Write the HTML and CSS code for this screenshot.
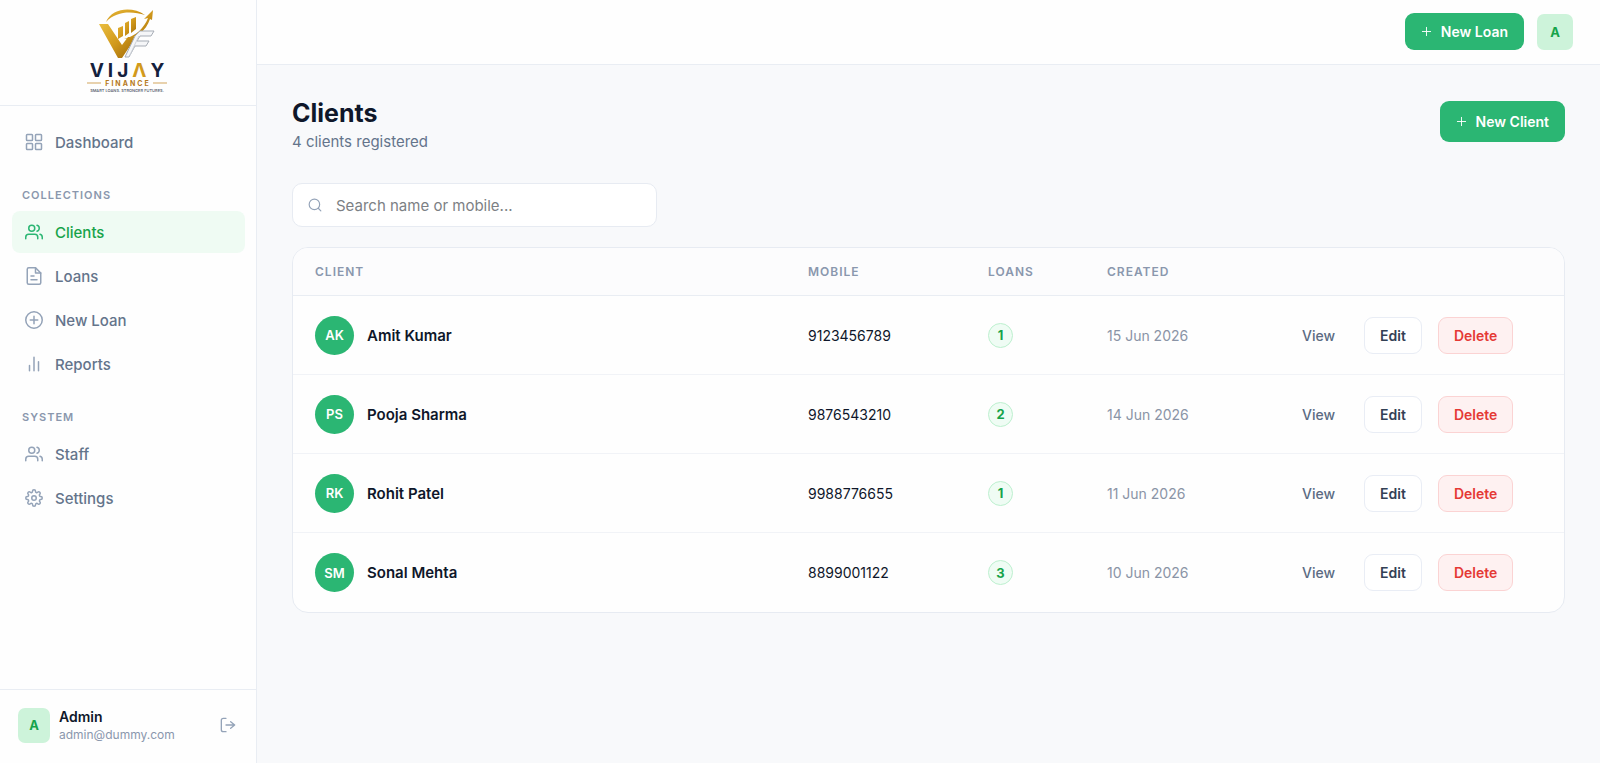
FILE: index.html
```html
<!DOCTYPE html>
<html lang="en">
<head>
  <meta charset="UTF-8" />
  <meta name="viewport" content="width=device-width, initial-scale=1.0" />
  <title>Clients - Vijay Finance</title>
  <link rel="stylesheet" href="styles.css">
</head>
<body>
  <!-- shared icons -->
  <svg class="sprite" aria-hidden="true">
    <symbol id="i-users" viewBox="0 0 24 24"><path d="M17 21v-2a4 4 0 0 0-4-4H5a4 4 0 0 0-4 4v2"/><circle cx="9" cy="7" r="4"/><path d="M23 21v-2a4 4 0 0 0-3-3.87"/><path d="M16 3.13a4 4 0 0 1 0 7.75"/></symbol>
    <symbol id="i-plus" viewBox="0 0 24 24"><path d="M12 3v18M3 12h18"/></symbol>
  </svg>

  <div class="layout">
    <aside class="sidebar">
      <a class="logo" href="#">
        <svg viewBox="0 0 120 104" role="img" aria-label="Vijay Finance">
          <defs>
            <linearGradient id="gold" x1="0" y1="0" x2="1" y2="1">
              <stop offset="0" stop-color="#e9bd3f"/>
              <stop offset="0.5" stop-color="#d29a1c"/>
              <stop offset="1" stop-color="#9c6708"/>
            </linearGradient>
          </defs>
          <path d="M36 22C42 8 62 6 75 15C62 11 46 11 36 22Z" fill="url(#gold)"/>
          <path d="M29 24h9l14 21 6-8h8L52 58h-4Z" fill="url(#gold)"/>
          <path d="M48 28l5-2v10l-5 3ZM55 23l4-2v12l-4 3ZM61 19l5-2v12l-5 4Z" fill="url(#gold)"/>
          <path d="M54 39C66 36 74 28 78 18l-4 1 9-9-1 10-2-1C76 31 66 39 54 39Z" fill="url(#gold)"/>
          <path d="M55 57l10-21 5-5h14l-3 5H70l-3 5h12l-3 5H65l-6 11Z" fill="#f5f6f8" stroke="#a7adb6" stroke-width="1"/>
          <path d="M60 55l6-13 3-6" fill="none" stroke="#cfd3d9" stroke-width="1"/>
          <text class="logo-name" x="59" y="77" text-anchor="middle">VIJ<tspan class="logo-gold">Λ</tspan>Y</text>
          <path d="M17 83h14M83 83h14" stroke="#d2a55c" stroke-width="1"/>
          <text class="logo-sub" x="58" y="86" text-anchor="middle">FINANCE</text>
          <text class="logo-tag" x="57" y="92" text-anchor="middle">SMART LOANS. STRONGER FUTURES.</text>
        </svg>
      </a>

      <nav class="nav">
        <a class="nav-item" href="#"><svg class="icon" viewBox="0 0 24 24"><rect x="2" y="2" width="8" height="8" rx="1"/><rect x="14" y="2" width="8" height="8" rx="1"/><rect x="2" y="14" width="8" height="8" rx="1"/><rect x="14" y="14" width="8" height="8" rx="1"/></svg>Dashboard</a>

        <div class="nav-label">Collections</div>
        <a class="nav-item active" href="#"><svg class="icon"><use href="#i-users"/></svg>Clients</a>
        <a class="nav-item" href="#"><svg class="icon" viewBox="0 0 24 24"><path d="M14 1H5a2 2 0 0 0-2 2v18a2 2 0 0 0 2 2h14a2 2 0 0 0 2-2V8Z"/><path d="M14 1v7h7M8 12h4M8 17h8"/></svg>Loans</a>
        <a class="nav-item" href="#"><svg class="icon" viewBox="0 0 24 24"><circle cx="12" cy="12" r="11"/><path d="M12 7v10M7 12h10"/></svg>New Loan</a>
        <a class="nav-item" href="#"><svg class="icon" viewBox="0 0 24 24"><path d="M6 21v-7M12 21V3M18 21V9"/></svg>Reports</a>

        <div class="nav-label">System</div>
        <a class="nav-item" href="#"><svg class="icon"><use href="#i-users"/></svg>Staff</a>
        <a class="nav-item" href="#"><svg class="icon" viewBox="0 0 24 24"><circle cx="12" cy="12" r="3"/><path d="M19.4 15a1.65 1.65 0 0 0 .33 1.82l.06.06a2 2 0 1 1-2.83 2.83l-.06-.06a1.65 1.65 0 0 0-2.82 1.17V21a2 2 0 0 1-4 0v-.09A1.65 1.65 0 0 0 7.18 19.65l-.06.06a2 2 0 1 1-2.83-2.83l.06-.06A1.65 1.65 0 0 0 3.09 14H3a2 2 0 0 1 0-4h.09A1.65 1.65 0 0 0 4.35 7.18l-.06-.06a2 2 0 1 1 2.83-2.83l.06.06A1.65 1.65 0 0 0 10 3.09V3a2 2 0 0 1 4 0v.09a1.65 1.65 0 0 0 2.82 1.26l.06-.06a2 2 0 1 1 2.83 2.83l-.06.06A1.65 1.65 0 0 0 20.91 10H21a2 2 0 0 1 0 4h-.09a1.65 1.65 0 0 0-1.51 1z"/></svg>Settings</a>
      </nav>

      <div class="user">
        <span class="user-avatar">A</span>
        <div class="user-info">
          <div class="user-name">Admin</div>
          <div class="user-mail">admin@dummy.com</div>
        </div>
        <button class="logout" type="button" aria-label="Log out"><svg viewBox="0 0 24 24"><path d="M9 22H5a3 3 0 0 1-3-3V5a3 3 0 0 1 3-3h4M16 17l6-5-6-5M22 12H9"/></svg></button>
      </div>
    </aside>

    <div class="content">
      <header class="topbar">
        <button class="btn btn-primary" type="button"><svg class="plus"><use href="#i-plus"/></svg>New Loan</button>
        <button class="user-avatar top-avatar" type="button">A</button>
      </header>

      <main class="main">
        <div class="page-head">
          <div>
            <h1>Clients</h1>
            <p>4 clients registered</p>
          </div>
          <button class="btn btn-primary btn-large" type="button"><svg class="plus"><use href="#i-plus"/></svg>New Client</button>
        </div>

        <label class="search">
          <svg viewBox="0 0 24 24"><circle cx="11" cy="11" r="9"/><path d="M22 22l-4-4"/></svg>
          <input type="search" placeholder="Search name or mobile..." aria-label="Search name or mobile">
        </label>

        <div class="card">
          <table class="clients">
            <thead>
              <tr>
                <th>Client</th>
                <th class="col-mobile">Mobile</th>
                <th class="col-loans">Loans</th>
                <th class="col-created">Created</th>
                <th class="col-actions" aria-label="Actions"></th>
              </tr>
            </thead>
            <tbody>
              <tr>
                <td><div class="client"><span class="initials">AK</span>Amit Kumar</div></td>
                <td>9123456789</td>
                <td><span class="count">1</span></td>
                <td class="date">15 Jun 2026</td>
                <td><div class="actions"><button class="btn btn-ghost" type="button">View</button><button class="btn btn-outline" type="button">Edit</button><button class="btn btn-danger" type="button">Delete</button></div></td>
              </tr>
              <tr>
                <td><div class="client"><span class="initials">PS</span>Pooja Sharma</div></td>
                <td>9876543210</td>
                <td><span class="count">2</span></td>
                <td class="date">14 Jun 2026</td>
                <td><div class="actions"><button class="btn btn-ghost" type="button">View</button><button class="btn btn-outline" type="button">Edit</button><button class="btn btn-danger" type="button">Delete</button></div></td>
              </tr>
              <tr>
                <td><div class="client"><span class="initials">RK</span>Rohit Patel</div></td>
                <td>9988776655</td>
                <td><span class="count">1</span></td>
                <td class="date">11 Jun 2026</td>
                <td><div class="actions"><button class="btn btn-ghost" type="button">View</button><button class="btn btn-outline" type="button">Edit</button><button class="btn btn-danger" type="button">Delete</button></div></td>
              </tr>
              <tr>
                <td><div class="client"><span class="initials">SM</span>Sonal Mehta</div></td>
                <td>8899001122</td>
                <td><span class="count">3</span></td>
                <td class="date">10 Jun 2026</td>
                <td><div class="actions"><button class="btn btn-ghost" type="button">View</button><button class="btn btn-outline" type="button">Edit</button><button class="btn btn-danger" type="button">Delete</button></div></td>
              </tr>
            </tbody>
          </table>
        </div>
      </main>
    </div>
  </div>
</body>
</html>
```
FILE: styles.css
```css
* {
  box-sizing: border-box;
}

body {
  margin: 0;
  font-family: Inter, sans-serif;
  font-size: 14px;
  background-color: #f8f9fb;
  color: #0f172a;
}

button,
input {
  font-family: inherit;
}

svg {
  fill: none;
  stroke: currentColor;
  stroke-width: 2;
  stroke-linecap: round;
  stroke-linejoin: round;
}

.sprite {
  display: none;
}

.layout {
  display: flex;
  min-height: 100vh;
}

/* Sidebar */
.sidebar {
  width: 257px;
  flex-shrink: 0;
  display: flex;
  flex-direction: column;
  background: #fefefe;
  border-right: 1px solid #e9edf3;
}

.logo {
  display: flex;
  justify-content: center;
  height: 106px;
  padding-left: 4px;
  border-bottom: 1px solid #e9edf3;
}

.logo svg {
  width: 120px;
  height: 104px;
  stroke: none;
  stroke-linecap: butt;
  stroke-linejoin: miter;
}

.logo-name {
  font-size: 19px;
  font-weight: 700;
  letter-spacing: 4px;
  fill: #14213d;
}

.logo-gold {
  fill: #d29a1c;
}

.logo-sub {
  font-size: 7px;
  font-weight: 700;
  letter-spacing: 2px;
  fill: #b67a1b;
}

.logo-tag {
  font-size: 4px;
  font-weight: 500;
  fill: #4b5365;
}

.nav {
  flex: 1;
  display: flex;
  flex-direction: column;
  gap: 2px;
  padding: 15px 11px 15px 12px;
}

.nav-item {
  display: flex;
  align-items: center;
  gap: 12px;
  height: 42px;
  padding: 0 13px;
  border-radius: 8px;
  color: #64748b;
  font-size: 15px;
  font-weight: 500;
  text-decoration: none;
}

.nav-item .icon {
  width: 18px;
  height: 18px;
  color: #94a3b8;
}

.nav-item.active {
  background: #effbf3;
  color: #16a34a;
}

.nav-item.active .icon {
  color: #2bb673;
}

.nav-label {
  padding: 22px 10px 6px;
  font-size: 11px;
  line-height: 16px;
  font-weight: 600;
  letter-spacing: 1px;
  text-transform: uppercase;
  color: #8a97ad;
}

.user {
  display: flex;
  align-items: center;
  gap: 9px;
  height: 74px;
  padding: 0 20px 3px 18px;
  border-top: 1px solid #e9edf3;
}

.user-avatar {
  display: flex;
  align-items: center;
  justify-content: center;
  width: 32px;
  height: 35px;
  border: none;
  border-radius: 7px;
  background: #cdf3da;
  color: #16a34a;
  font-size: 13px;
  font-weight: 700;
}

.user-info {
  flex: 1;
}

.user-name {
  font-size: 14px;
  line-height: 19px;
  font-weight: 600;
}

.user-mail {
  font-size: 12px;
  line-height: 18px;
  color: #8a97ad;
}

.logout {
  display: flex;
  padding: 0;
  border: none;
  background: none;
  color: #94a3b8;
}

.logout svg {
  width: 16px;
  height: 16px;
}

/* Top bar */
.content {
  flex: 1;
  min-width: 0;
}

.topbar {
  display: flex;
  align-items: center;
  justify-content: flex-end;
  gap: 13px;
  height: 65px;
  padding: 0 27px 1px;
  background: #fefefe;
  border-bottom: 1px solid #e9edf3;
}

.top-avatar {
  width: 36px;
  height: 36px;
  padding: 0;
}

/* Buttons */
.btn {
  display: flex;
  align-items: center;
  justify-content: center;
  height: 37px;
  padding: 0 15px;
  border: 1px solid transparent;
  border-radius: 9px;
  background: none;
  font-size: 14px;
  font-weight: 600;
  cursor: pointer;
}

.btn-primary {
  gap: 9px;
  padding: 0 16px;
  border: none;
  background: #2bb673;
  color: white;
}

.btn-large {
  height: 41px;
}

.plus {
  width: 11px;
  height: 11px;
}

.btn-ghost {
  padding: 0 12px 0 0;
  color: #5b6b83;
  font-weight: 500;
}

.btn-outline {
  background: white;
  border-color: #e9edf5;
  color: #334155;
}

.btn-danger {
  background: #fef1f1;
  border-color: #fbd3d3;
  color: #e53935;
}

/* Page */
.main {
  padding: 32px 35px;
}

.page-head {
  display: flex;
  justify-content: space-between;
  align-items: flex-start;
  margin-bottom: 28px;
}

.page-head .btn {
  margin-top: 4px;
}

h1 {
  margin: 0;
  font-size: 25px;
  line-height: 32px;
  font-weight: 700;
}

.page-head p {
  margin: 0;
  font-size: 15px;
  line-height: 26px;
  color: #64748b;
}

.search {
  display: flex;
  align-items: center;
  gap: 14px;
  width: 365px;
  max-width: 100%;
  height: 44px;
  margin-bottom: 20px;
  padding: 0 15px;
  background: white;
  border: 1px solid #e7ebf2;
  border-radius: 10px;
}

.search svg {
  width: 14px;
  height: 14px;
  flex-shrink: 0;
  color: #94a3b8;
}

.search input {
  flex: 1;
  min-width: 0;
  padding: 0;
  border: none;
  outline: none;
  background: none;
  font-size: 15px;
}

.search input::placeholder {
  color: #7c7f84;
}

.card {
  overflow: hidden;
  background: #fefefe;
  border: 1px solid #e7ebf2;
  border-radius: 16px;
}

.clients {
  width: 100%;
  table-layout: fixed;
  border-spacing: 0;
}

.clients th {
  height: 48px;
  padding: 0 22px;
  border-bottom: 1px solid #e9edf3;
  background: #fcfcfd;
  text-align: left;
  font-size: 12px;
  font-weight: 600;
  letter-spacing: 1px;
  text-transform: uppercase;
  color: #8a97ad;
}

.clients td {
  height: 79px;
  padding: 0 22px;
  border-bottom: 1px solid #f1f3f7;
}

.clients tr:last-child td {
  border-bottom: none;
}

.clients .col-mobile {
  width: 180px;
}

.clients .col-loans {
  width: 119px;
}

.clients .col-created {
  width: 194px;
}

.clients .col-actions {
  width: 285px;
}

.client {
  display: flex;
  align-items: center;
  gap: 13px;
  font-size: 15px;
  font-weight: 600;
}

.initials {
  display: flex;
  align-items: center;
  justify-content: center;
  width: 39px;
  height: 39px;
  border-radius: 50%;
  background: #2bb673;
  color: white;
  font-size: 13px;
}

.count {
  display: flex;
  align-items: center;
  justify-content: center;
  width: 25px;
  height: 25px;
  border: 1px solid #bdf0cf;
  border-radius: 50%;
  background: #effcf4;
  color: #16a34a;
  font-size: 13px;
  font-weight: 700;
}

.clients .date {
  color: #8a94a6;
}

.actions {
  display: flex;
  gap: 16px;
}
```
